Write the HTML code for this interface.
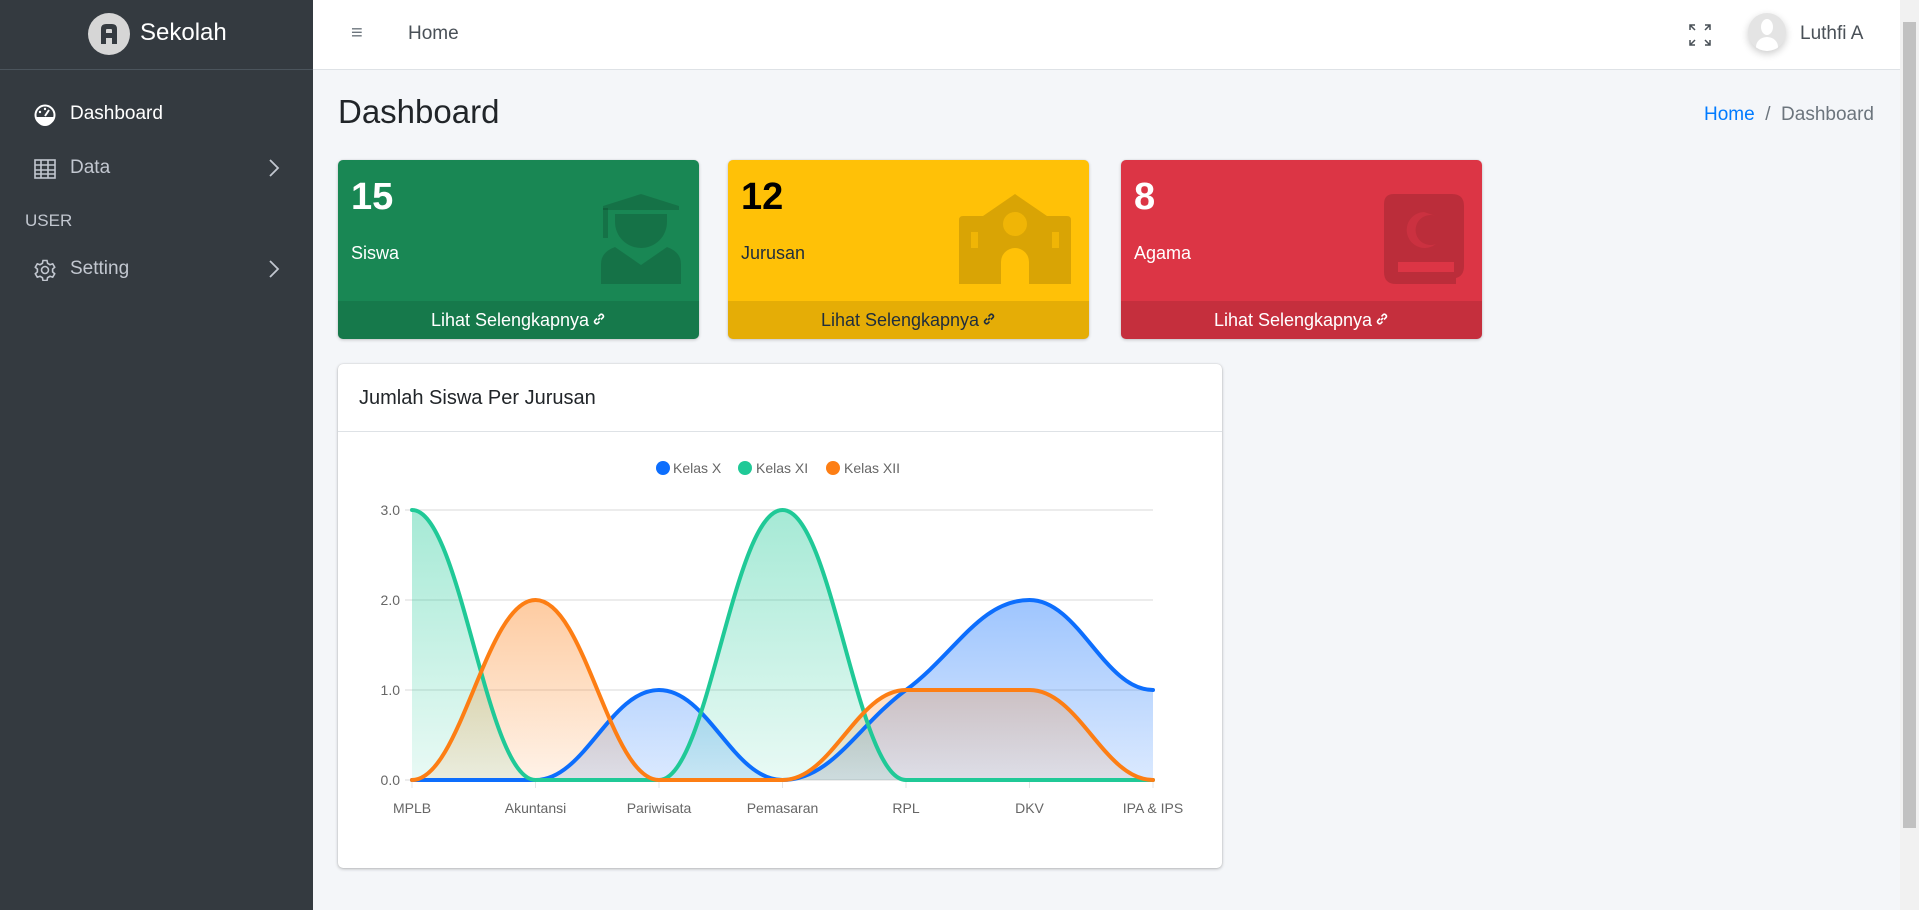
<!DOCTYPE html>
<html><head><meta charset="utf-8"><style>
*{box-sizing:border-box;margin:0;padding:0}
body{width:1919px;height:910px;overflow:hidden;font-family:"Liberation Sans",sans-serif;background:#f4f6f9;position:relative;color:#212529}
.sb{position:absolute;left:0;top:0;width:313px;height:910px;background:#343a40;color:#c2c7d0}
.brand{height:70px;border-bottom:1px solid #4b545c;position:relative}
.logo{position:absolute;left:88px;top:13px;width:42px;height:42px;border-radius:50%;background:#d6d6d6}
.brand span{position:absolute;left:140px;top:19px;font-size:24px;color:#fff;font-weight:300}
.nav{position:absolute;left:34px;font-size:19px;color:#c2c7d0}
.nav svg{position:absolute;left:0;top:1px}
.nav b{position:absolute;left:36px;font-weight:normal;white-space:nowrap}
.chev{position:absolute;left:268px}
.hdr{position:absolute;left:313px;top:0;width:1587px;height:70px;background:#fff;border-bottom:1px solid #dee2e6}
.scroll{position:absolute;left:1900px;top:0;width:19px;height:910px;background:#f1f1f1}
.scroll div{position:absolute;left:3px;top:22px;width:13px;height:806px;background:#c1c1c1}
.card{position:absolute;top:160px;width:361px;height:179px;border-radius:5px;overflow:hidden;box-shadow:0 0 1px rgba(0,0,0,.13),0 1px 3px rgba(0,0,0,.2)}
.card .n{position:absolute;left:13px;top:16px;font-size:38px;font-weight:bold}
.card .lab{position:absolute;left:13px;top:83px;font-size:18px}
.card .f{position:absolute;left:0;bottom:0;width:100%;height:38px;background:rgba(0,0,0,.1);text-align:center;font-size:18px;line-height:38px}
.card svg.ic{position:absolute;right:18px;top:34px}
</style></head><body>
<div class="sb">
 <div class="brand"><div class="logo"><svg width="42" height="42" viewBox="0 0 42 42"><path d="M13 31V16q0-5 5-5h6q5 0 5 5v15h-5v-6h-6v6z M18 20h6v-3q0-1-1-1h-4q-1 0-1 1z" fill="#343a40" fill-rule="evenodd"/></svg></div><span>Sekolah</span></div>
 <div class="nav" style="top:103px;color:#fff"><svg width="22" height="22" viewBox="0 0 22 22"><circle cx="11" cy="11" r="9.5" fill="none" stroke="#fff" stroke-width="2"/><path d="M2 13h18a9 9 0 0 1-18 0z" fill="#fff"/><path d="M11 12l4-6" stroke="#fff" stroke-width="2"/><circle cx="6" cy="8" r="1.2" fill="#fff"/><circle cx="11" cy="5" r="1.2" fill="#fff"/></svg><b>Dashboard</b></div>
 <div class="nav" style="top:157px"><svg width="22" height="22" viewBox="0 0 22 22" fill="none" stroke="#c2c7d0" stroke-width="1.6"><rect x="1" y="2" width="20" height="18"/><path d="M1 7h20M1 12h20M1 16h20M7 2v18M14 2v18"/></svg><b>Data</b></div>
 <svg class="chev" style="top:158px" width="12" height="20" viewBox="0 0 12 20"><path d="M2 2l8 8-8 8" fill="none" stroke="#c2c7d0" stroke-width="1.8"/></svg>
 <div style="position:absolute;left:25px;top:211px;font-size:17px;color:#c2c7d0">USER</div>
 <div class="nav" style="top:258px"><svg width="22" height="22" viewBox="0 0 22 22" fill="none" stroke="#c2c7d0" stroke-width="1.6"><circle cx="11" cy="11" r="3.5"/><path d="M9 1.5h4l.6 2.8 2.4 1.4 2.7-.9 2 3.4-2.1 1.9v2.8l2.1 1.9-2 3.4-2.7-.9-2.4 1.4-.6 2.8H9l-.6-2.8L6 17.3l-2.7.9-2-3.4 2.1-1.9V10.1L1.3 8.2l2-3.4 2.7.9 2.4-1.4z"/></svg><b>Setting</b></div>
 <svg class="chev" style="top:259px" width="12" height="20" viewBox="0 0 12 20"><path d="M2 2l8 8-8 8" fill="none" stroke="#c2c7d0" stroke-width="1.8"/></svg>
</div>
<div class="hdr">
 <div style="position:absolute;left:38px;top:22px;font-size:20px;color:#6c757d">&#x2261;</div>
 <div style="position:absolute;left:95px;top:23px;font-size:19px;color:#495057">Home</div>
 <svg style="position:absolute;left:1376px;top:24px" width="22" height="22" viewBox="0 0 22 22" fill="none" stroke="#495057" stroke-width="1.5"><path d="M1 6V1h5M1 1l5 5M16 1h5v5M21 1l-5 5M1 16v5h5M1 21l5-5M21 16v5h-5M21 21l-5-5"/></svg>
 <div style="position:absolute;left:1435px;top:13px;width:38px;height:38px;border-radius:50%;background:#e4e4e4;overflow:hidden;box-shadow:0 3px 8px rgba(0,0,0,.2)"><div style="position:absolute;left:13px;top:6px;width:12px;height:16px;border-radius:50%;background:#fff"></div><div style="position:absolute;left:8px;top:24px;width:22px;height:20px;border-radius:50%;background:#fff"></div></div>
 <div style="position:absolute;left:1487px;top:23px;font-size:19px;color:#495057">Luthfi A</div>
</div>
<div class="scroll"><div></div></div>
<div style="position:absolute;left:338px;top:93px;font-size:33px;color:#212529">Dashboard</div>
<div style="position:absolute;right:45px;top:104px;font-size:19px;color:#6c757d"><span style="color:#007bff">Home</span>&nbsp;&nbsp;/&nbsp;&nbsp;Dashboard</div>

<div class="card" style="left:338px;background:#198754;color:#fff">
 <div class="n">15</div><div class="lab">Siswa</div>
 <svg class="ic" width="80" height="90" viewBox="0 0 80 90" fill="rgba(0,0,0,.15)"><path d="M40 0l38 12v4H2v-4z"/><rect x="2" y="14" width="5" height="30"/><path d="M14 20h52v8a26 26 0 0 1-52 0z"/><path d="M0 90V70q0-12 14-17l26 18 26-18q14 5 14 17v20z"/></svg>
 <div class="f">Lihat Selengkapnya<svg width="14" height="14" viewBox="0 0 14 14" fill="none" stroke="currentColor" stroke-width="1.6" style="margin-left:3px"><path d="M6 8l2-2M5 6.5L3 8.5a2 2 0 0 0 2.8 2.8L7.5 9.5M9 7.5l2-2A2 2 0 0 0 8.2 2.7L6.5 4.5"/></svg></div>
</div>
<div class="card" style="left:728px;background:#ffc107;color:#1f2d3d">
 <div class="n" style="color:#000">12</div><div class="lab">Jurusan</div>
 <svg class="ic" width="112" height="90" viewBox="0 0 112 90" fill="rgba(0,0,0,.15)"><path d="M56 0l32 22h20q4 0 4 4v64H70V68a14 14 0 0 0-28 0v22H0V26q0-4 4-4h20z"/><circle cx="56" cy="30" r="12" fill="#ffc107" opacity=".6"/><rect x="12" y="38" width="7" height="16" fill="#ffc107" opacity=".6"/><rect x="93" y="38" width="7" height="16" fill="#ffc107" opacity=".6"/></svg>
 <div class="f">Lihat Selengkapnya<svg width="14" height="14" viewBox="0 0 14 14" fill="none" stroke="currentColor" stroke-width="1.6" style="margin-left:3px"><path d="M6 8l2-2M5 6.5L3 8.5a2 2 0 0 0 2.8 2.8L7.5 9.5M9 7.5l2-2A2 2 0 0 0 8.2 2.7L6.5 4.5"/></svg></div>
</div>
<div class="card" style="left:1121px;background:#dc3545;color:#fff">
 <div class="n">8</div><div class="lab">Agama</div>
 <svg class="ic" width="80" height="90" viewBox="0 0 80 90" fill="rgba(0,0,0,.15)"><path d="M10 0h58q12 0 12 12v60q0 10-8 12v6H12Q0 90 0 78V10Q0 0 10 0zM14 68v10h56V68z" fill-rule="evenodd"/><path d="M40 18a18 18 0 1 0 12 32a15 15 0 1 1 0-28z" fill="#dc3545" opacity=".5"/></svg>
 <div class="f">Lihat Selengkapnya<svg width="14" height="14" viewBox="0 0 14 14" fill="none" stroke="currentColor" stroke-width="1.6" style="margin-left:3px"><path d="M6 8l2-2M5 6.5L3 8.5a2 2 0 0 0 2.8 2.8L7.5 9.5M9 7.5l2-2A2 2 0 0 0 8.2 2.7L6.5 4.5"/></svg></div>
</div>

<div style="position:absolute;left:338px;top:364px;width:884px;height:504px;background:#fff;border-radius:5px;box-shadow:0 0 1px rgba(0,0,0,.2),0 1px 3px rgba(0,0,0,.25)">
 <div style="height:68px;border-bottom:1px solid #dee2e6;padding:23px 0 0 21px;font-size:20px;color:#212529">Jumlah Siswa Per Jurusan</div>
</div>
<svg style="position:absolute;left:0;top:0" width="1919" height="910" font-family="Liberation Sans,sans-serif" font-size="14" fill="#666">
<defs>
<linearGradient id="gg" x1="0" y1="510" x2="0" y2="780" gradientUnits="userSpaceOnUse"><stop offset="0" stop-color="#20c997" stop-opacity=".4"/><stop offset="1" stop-color="#20c997" stop-opacity=".1"/></linearGradient>
<linearGradient id="gb" x1="0" y1="600" x2="0" y2="780" gradientUnits="userSpaceOnUse"><stop offset="0" stop-color="#0d6efd" stop-opacity=".4"/><stop offset="1" stop-color="#0d6efd" stop-opacity=".15"/></linearGradient>
<linearGradient id="go" x1="0" y1="600" x2="0" y2="780" gradientUnits="userSpaceOnUse"><stop offset="0" stop-color="#fd7e14" stop-opacity=".4"/><stop offset="1" stop-color="#fd7e14" stop-opacity=".1"/></linearGradient>
</defs>
<g stroke="#e5e5e5" stroke-width="1.5"><path d="M405 510H1153M405 600H1153M405 690H1153M405 780H1153"/></g>
<g stroke="#e5e5e5"><path d="M412 780v8M535.5 780v8M659 780v8M782.5 780v8M906 780v8M1029.5 780v8M1153 780v8"/></g>
<g text-anchor="end"><text x="400" y="515">3.0</text><text x="400" y="605">2.0</text><text x="400" y="695">1.0</text><text x="400" y="785">0.0</text></g>
<g text-anchor="middle"><text x="412" y="813">MPLB</text><text x="535.5" y="813">Akuntansi</text><text x="659" y="813">Pariwisata</text><text x="782.5" y="813">Pemasaran</text><text x="906" y="813">RPL</text><text x="1029.5" y="813">DKV</text><text x="1153" y="813">IPA &amp; IPS</text></g>
<circle cx="663" cy="468" r="7" fill="#0d6efd"/><text x="673" y="473">Kelas X</text>
<circle cx="745" cy="468" r="7" fill="#20c997"/><text x="756" y="473">Kelas XI</text>
<circle cx="833" cy="468" r="7" fill="#fd7e14"/><text x="844" y="473">Kelas XII</text>
<g stroke-width="4" stroke-linecap="round">
<path d="M412,780 C461,780 486,780 535.5,780 C585,780 610,690 659,690 C708,690 733,780 782.5,780 C832,780 857,726 906,690 C955,654 980,600 1029.5,600 C1079,600 1104,690 1153,690 V780 H412Z" fill="url(#gb)" stroke="none"/>
<path d="M412,510 C461,510 486,780 535.5,780 L659,780 C708,780 733,510 782.5,510 C832,510 857,780 906,780 L1153,780 V780 H412Z" fill="url(#gg)" stroke="none"/>
<path d="M412,780 C461,780 486,600 535.5,600 C585,600 610,780 659,780 L782.5,780 C832,780 857,690 906,690 L1029.5,690 C1079,690 1104,780 1153,780Z" fill="url(#go)" stroke="none"/>
<path d="M412,780 C461,780 486,780 535.5,780 C585,780 610,690 659,690 C708,690 733,780 782.5,780 C832,780 857,726 906,690 C955,654 980,600 1029.5,600 C1079,600 1104,690 1153,690" fill="none" stroke="#0d6efd"/>
<path d="M412,510 C461,510 486,780 535.5,780 L659,780 C708,780 733,510 782.5,510 C832,510 857,780 906,780 L1153,780" fill="none" stroke="#20c997"/>
<path d="M412,780 C461,780 486,600 535.5,600 C585,600 610,780 659,780 L782.5,780 C832,780 857,690 906,690 L1029.5,690 C1079,690 1104,780 1153,780" fill="none" stroke="#fd7e14"/>
</g>
</svg>
</body></html>
